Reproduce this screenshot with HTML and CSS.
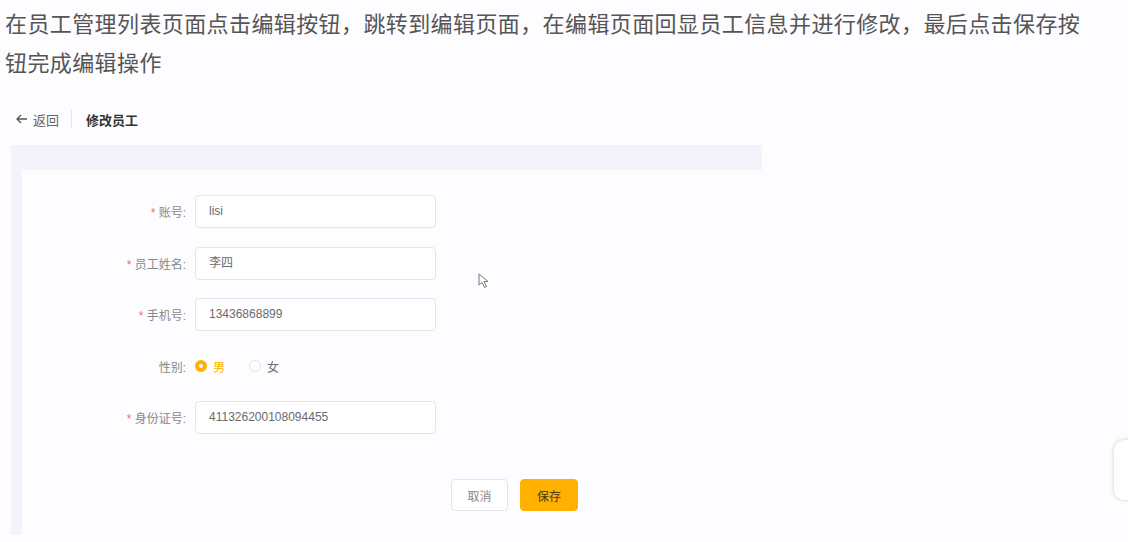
FILE: index.html
```html
<!DOCTYPE html>
<html lang="zh-CN">
<head>
    <meta charset="UTF-8">
    <title>修改员工</title>
    <link rel="stylesheet" href="styles.css">
</head>
<body>

<p class="intro">在员工管理列表页面点击编辑按钮，跳转到编辑页面，在编辑页面回显员工信息并进行修改，最后点击保存按钮完成编辑操作</p>

<div class="page-head">
    <span class="back">
        <svg width="12" height="10" viewBox="0 0 12 10"><path d="M5 1 L1 5 L5 9 M1 5 H11" fill="none" stroke="#555" stroke-width="1.3"/></svg>
        返回
    </span>
    <span class="divider"></span>
    <span class="title">修改员工</span>
</div>

<div class="panel">
    <div class="card">
        <div class="form-row">
            <label class="label"><span class="req">*</span> 账号:</label>
            <div class="input">lisi</div>
        </div>
        <div class="form-row">
            <label class="label"><span class="req">*</span> 员工姓名:</label>
            <div class="input">李四</div>
        </div>
        <div class="form-row">
            <label class="label"><span class="req">*</span> 手机号:</label>
            <div class="input">13436868899</div>
        </div>
        <div class="form-row">
            <label class="label">性别:</label>
            <div class="radios">
                <span class="radio checked"><i></i>男</span>
                <span class="radio"><i></i>女</span>
            </div>
        </div>
        <div class="form-row">
            <label class="label"><span class="req">*</span> 身份证号:</label>
            <div class="input">411326200108094455</div>
        </div>
        <div class="actions">
            <button class="btn">取消</button>
            <button class="btn primary">保存</button>
        </div>
    </div>
</div>

<svg class="cursor" width="12" height="16" viewBox="0 0 12 16"><path d="M1 1 L1 12 L4 9.5 L6.5 14.5 L8.5 13.5 L6 8.5 L10 8.5 Z" fill="#fff" stroke="#777" stroke-width="1"/></svg>

<div class="side-tab"></div>

</body>
</html>
```

FILE: styles.css
```css
body {
    margin: 0;
    background: #fdfcff;
    font-family: "Liberation Sans", "Noto Sans CJK SC", sans-serif;
    color: #606266;
    width: 1128px;
    height: 542px;
    overflow: hidden;
    position: relative;
}
.intro {
    margin: 0;
    padding: 5px 0 0 5px;
    width: 1095px;
    font-size: 22px;
    line-height: 39px;
    letter-spacing: 0.4px;
    color: #555;
}
.page-head {
    display: flex;
    align-items: center;
    height: 20px;
    margin-top: 26px;
    padding-left: 16px;
    font-size: 13px;
}
.back {
    display: flex;
    align-items: center;
    gap: 5px;
    color: #666;
}
.divider {
    width: 1px;
    height: 18px;
    background: #e4e4ea;
    margin: 0 14px 0 12px;
}
.title {
    font-weight: bold;
    color: #333;
}
.panel {
    margin: 16px 0 0 11px;
    width: 751px;
    height: 390px;
    background: #f4f3fb;
    padding: 25px 0 0 11px;
    box-sizing: border-box;
}
.card {
    background: #fdfcff;
    height: 100%;
    padding-top: 25px;
    box-sizing: border-box;
}
.form-row {
    display: flex;
    align-items: center;
    height: 33px;
    margin-bottom: 18.5px;
}
.label {
    width: 173px;
    padding-right: 9px;
    box-sizing: border-box;
    text-align: right;
    font-size: 12px;
    color: #888;
}
.req {
    color: #f56c6c;
}
.input {
    width: 241px;
    height: 33px;
    box-sizing: border-box;
    border: 1px solid #e4e5ea;
    border-radius: 4px;
    background: #fff;
    padding-left: 13px;
    line-height: 31px;
    font-size: 12px;
    color: #6a6a70;
}
.radios {
    display: flex;
    align-items: center;
    gap: 24px;
    font-size: 12px;
}
.radio {
    display: flex;
    align-items: center;
    gap: 6px;
    color: #6a6a70;
}
.radio i {
    width: 12px;
    height: 12px;
    border-radius: 50%;
    border: 1px solid #e2e2e8;
    background: #fff;
    box-sizing: border-box;
}
.radio.checked {
    color: #ffb000;
}
.radio.checked i {
    border: 4px solid #ffb000;
}
.actions {
    display: flex;
    gap: 12px;
    padding-left: 429px;
    margin-top: 45px;
}
.btn {
    width: 57px;
    height: 32px;
    border: 1px solid #e4e5ea;
    border-radius: 4px;
    background: #fff;
    font-family: inherit;
    font-size: 12px;
    color: #888;
}
.btn.primary {
    width: 58px;
    background: #ffb000;
    border-color: #ffb000;
    color: #4a3a10;
}
.cursor {
    position: absolute;
    left: 478px;
    top: 273px;
}
.side-tab {
    position: absolute;
    left: 1114px;
    top: 440px;
    width: 30px;
    height: 60px;
    background: #fff;
    border-radius: 10px;
    box-shadow: 0 0 4px rgba(0, 0, 0, 0.2);
}
```
